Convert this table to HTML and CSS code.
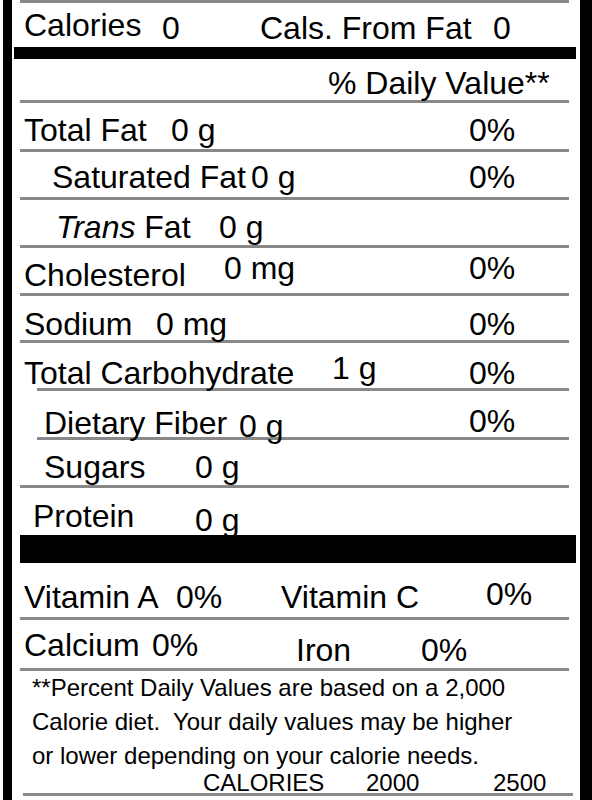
FILE: index.html
```html
<!DOCTYPE html>
<html lang="en">
<head>
    <meta charset="UTF-8">
    <meta name="viewport" content="width=device-width, initial-scale=1.0">
    <title>Nutrition Facts</title>
    <link rel="stylesheet" href="styles.css">
</head>
<body>
    <div class="label">
        <div class="row row-cal">
            <div class="up3">Calories</div>
            <div>0</div>
            <div>Cals. From Fat</div>
            <div>0</div>
        </div>
        <div class="bar bar-top"></div>
        <div class="row row-head">
            <div>% Daily Value**</div>
        </div>
        <div class="row row-fat">
            <div>Total Fat</div>
            <div>0 g</div>
            <div>0%</div>
        </div>
        <div class="row row-sat">
            <div>Saturated Fat</div>
            <div>0 g</div>
            <div>0%</div>
        </div>
        <div class="row row-trans">
            <div><i>Trans</i> Fat</div>
            <div>0 g</div>
        </div>
        <div class="row row-chol">
            <div>Cholesterol</div>
            <div class="up7">0 mg</div>
            <div class="up7">0%</div>
        </div>
        <div class="row row-sodium">
            <div>Sodium</div>
            <div>0 mg</div>
            <div>0%</div>
        </div>
        <div class="row row-carb short-line">
            <div>Total Carbohydrate</div>
            <div class="up5">1 g</div>
            <div>0%</div>
        </div>
        <div class="row row-fiber short-line">
            <div>Dietary Fiber</div>
            <div class="down3">0 g</div>
            <div class="up2">0%</div>
        </div>
        <div class="row row-sugars">
            <div>Sugars</div>
            <div>0 g</div>
        </div>
        <div class="row row-protein">
            <div>Protein</div>
            <div class="down4">0 g</div>
        </div>
        <div class="bar bar-mid"></div>
        <div class="row row-vit">
            <div>Vitamin A</div>
            <div>0%</div>
            <div>Vitamin C</div>
            <div class="up3">0%</div>
        </div>
        <div class="row row-calc">
            <div>Calcium</div>
            <div>0%</div>
            <div class="down5">Iron</div>
            <div class="down5">0%</div>
        </div>
        <div class="footnote">
            <div class="note-line">**Percent Daily Values are based on a 2,000</div>
            <div class="note-line">Calorie diet.&nbsp; Your daily values may be higher</div>
            <div class="note-line">or lower depending on your calorie needs.</div>
            <div class="cal-table">
                <div>CALORIES</div>
                <div>2000</div>
                <div>2500</div>
            </div>
        </div>
    </div>
</body>
</html>
```

FILE: styles.css
```css
* {
    box-sizing: border-box;
}
body {
    margin: 0;
    padding-left: 3px;
    background-color: #FFFFFF;
    font-family: 'Liberation Sans', Arial, sans-serif;
    color: #000000;
}
.label {
    width: 589px;
    height: 800px;
    border-left: 9px solid #000000;
    border-right: 12px solid #000000;
    overflow: hidden;
}
.row {
    display: grid;
    align-items: end;
    margin: 0 11px 0 8px;
    padding-left: 4px;
    border-bottom: 3px solid #888888;
    font-size: 32px;
    line-height: 31px;
    white-space: nowrap;
}
.row i {
    font-style: italic;
}
.short-line {
    border-bottom: none;
    background: linear-gradient(#888888, #888888) no-repeat right bottom / calc(100% - 17px) 3px;
}
.bar {
    background-color: #000000;
}
.bar-top {
    height: 12px;
    margin: 0 4px 0 2px;
}
.bar-mid {
    height: 28px;
    margin: 0 4px 0 8px;
}

/* rows, top to bottom */
.row-cal {
    height: 47px;
    border-top: 3px solid #888888;
    border-bottom: none;
    padding-bottom: 3px;
    grid-template-columns: 138px 98px 233px auto;
}
.row-head {
    height: 44px;
    padding-bottom: 1px;
    padding-left: 308px;
}
.row-fat {
    height: 49px;
    padding-bottom: 3px;
    grid-template-columns: 147px 298px auto;
}
.row-sat {
    height: 48px;
    padding-bottom: 4px;
    padding-left: 32px;
    grid-template-columns: 199px 218px auto;
}
.row-trans {
    height: 48px;
    padding-bottom: 2px;
    padding-left: 36px;
    grid-template-columns: 163px auto;
}
.row-chol {
    height: 48px;
    padding-bottom: 2px;
    grid-template-columns: 200px 245px auto;
}
.row-sodium {
    height: 47px;
    padding-bottom: 0;
    grid-template-columns: 132px 313px auto;
}
.row-carb {
    height: 48px;
    padding-bottom: 2px;
    grid-template-columns: 308px 137px auto;
}
.row-fiber {
    height: 49px;
    padding-bottom: 1px;
    padding-left: 24px;
    grid-template-columns: 195px 230px auto;
}
.row-sugars {
    height: 48px;
    padding-bottom: 2px;
    padding-left: 24px;
    grid-template-columns: 151px auto;
}
.row-protein {
    height: 47px;
    padding-bottom: 3px;
    padding-left: 13px;
    border-bottom: none;
    grid-template-columns: 162px auto;
}
.row-vit {
    height: 57px;
    padding-bottom: 4px;
    grid-template-columns: 152px 105px 205px auto;
}
.row-calc {
    height: 51px;
    padding-bottom: 7px;
    grid-template-columns: 128px 144px 125px auto;
}

/* small baseline shifts */
.up2 { margin-bottom: 2px; }
.up3 { margin-bottom: 3px; }
.up5 { margin-bottom: 5px; }
.up7 { margin-bottom: 7px; }
.down3 { margin-bottom: -3px; }
.down4 { margin-bottom: -4px; }
.down5 { margin-bottom: -5px; }

.footnote {
    height: 125px;
    margin: 0 7px 0 11px;
    padding-left: 9px;
    border-bottom: 3px solid #888888;
    font-size: 24px;
    white-space: nowrap;
}
.note-line {
    line-height: 34px;
}
.cal-table {
    display: grid;
    grid-template-columns: 163px 127px auto;
    padding-left: 171px;
    line-height: 20px;
}
```
